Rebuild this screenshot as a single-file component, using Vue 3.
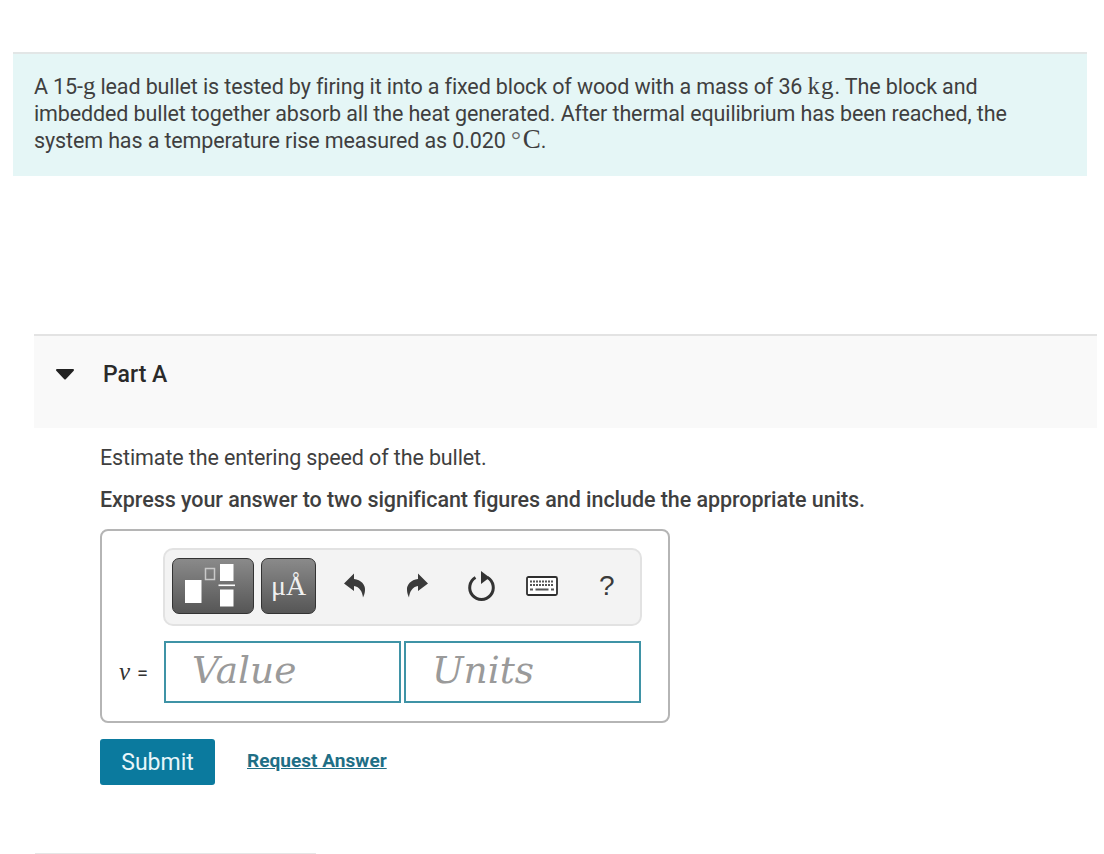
<script setup>
const placeholders = ['Value', 'Units']
</script>

<template>
  <div class="page">
    <section class="intro">
      <p>
        A 15-<span class="math">g</span> lead bullet is tested by firing it into a fixed block of wood with a mass of 36 <span class="math kg">kg</span>. The block and
        imbedded bullet together absorb all the heat generated. After thermal equilibrium has been reached, the
        system has a temperature rise measured as 0.020 <span class="math"><span class="deg">°</span><span class="celsius">C</span></span>.
      </p>
    </section>

    <section class="part">
      <header class="part-head">
        <svg class="caret" width="20" height="12" viewBox="0 0 20 12"><path d="M2 2H18L10 10.500Z" fill="#222" stroke="#222" stroke-width="2" stroke-linejoin="round" /></svg>
        <h2>Part A</h2>
      </header>

      <div class="part-body">
        <p class="question">Estimate the entering speed of the bullet.</p>
        <p class="instruction">Express your answer to two significant figures and include the appropriate units.</p>

        <div class="answer-box">
          <div class="toolbar">
            <button class="tool templates" aria-label="Templates">
              <svg width="80" height="54" viewBox="0 0 80 54">
                <rect x="12" y="21" width="16.500" height="23" fill="#fff" />
                <rect x="32.500" y="9.500" width="9" height="11" fill="none" stroke="#c9c9c9" stroke-width="1.500" />
                <rect x="47" y="5" width="13.500" height="17" fill="#fff" />
                <rect x="45.500" y="25.500" width="16.500" height="1.600" fill="#fff" />
                <rect x="47" y="30.500" width="13.500" height="17" fill="#fff" />
              </svg>
            </button>
            <button class="tool units-tool">μÅ</button>
            <div class="actions">
              <svg class="action" width="24" height="26" viewBox="0 0 24 26"><path d="M1 10.500 11 .5V6C18 6.500 22.500 12 22 17 22 20 21 22 20 24.500 19.500 19 16.500 13.500 11 13V18Z" fill="#3a3a3a" /></svg>
              <svg class="action" width="24" height="26" viewBox="0 0 24 26"><path d="M22 10.500 12 .5V6C5 6.500 .5 12 1 17 1 20 2 22 3 24.500 3.500 19 6.500 13.500 12 13V18Z" fill="#3a3a3a" /></svg>
              <svg class="action" width="30" height="32" viewBox="0 0 30 32">
                <path d="M9.500 7.500A11.800 11.800 0 1 0 21.500 7.500" fill="none" stroke="#333" stroke-width="3" />
                <path d="M15 1 23.500 7.500 15 14Z" fill="#333" />
              </svg>
              <svg class="action" width="32" height="20" viewBox="0 0 32 20">
                <rect x="1" y="1" width="30" height="18" rx="1.500" fill="#fff" stroke="#2e2e2e" stroke-width="1.800" />
                <path d="M4 5.500H28M4 9H28" stroke="#555" stroke-width="2" stroke-dasharray="2 1" />
                <path d="M4 13.500H7M9.500 13.500H22.500M25 13.500H28" stroke="#555" stroke-width="2" />
              </svg>
              <span class="help">?</span>
            </div>
          </div>

          <div class="input-row">
            <label class="var"><i>v</i> =</label>
            <div class="fields">
              <input v-for="p in placeholders" :key="p" class="field" :placeholder="p" />
            </div>
          </div>
        </div>

        <div class="submit-row">
          <button class="submit">Submit</button>
          <a class="request" href="#">Request Answer</a>
        </div>
      </div>
    </section>

    <div class="next-rule"></div>
  </div>
</template>

<style scoped>
.page {
  height: 854px;
  overflow: hidden;
  box-sizing: border-box;
  padding-top: 52px;
  font-family: Roboto, "Liberation Sans", sans-serif;
  color: #3f3f3f;
}

.intro {
  margin: 0 17px 0 13px;
  height: 124px;
  box-sizing: border-box;
  border-top: 2px solid #e2e6e6;
  background: #e5f6f6;
  padding: 19px 21px 0;
}

.intro p {
  margin: 0;
  font-size: 21.5px;
  line-height: 27px;
  letter-spacing: -0.12px;
}

.math {
  font-family: "Liberation Serif", serif;
  font-size: 25px;
  line-height: 0;
}

.kg {
  letter-spacing: 1px;
}

.deg {
  margin-right: 2px;
  color: #6a6a6a;
}

.celsius {
  font-size: 27px;
}

.part {
  margin: 158px 7px 0 34px;
}

.part-head {
  height: 94px;
  box-sizing: border-box;
  border-top: 2px solid #e3e3e3;
  background: #f9f9f9;
  display: flex;
  align-items: flex-start;
  padding: 25px 0 0 21px;
}

.caret {
  margin-top: 7px;
}

.part-head h2 {
  margin: 0 0 0 28px;
  font-size: 23px;
  line-height: 27px;
  font-weight: 500;
  color: #2a2a2a;
}

.part-body {
  padding: 16px 0 0 66px;
}

.question {
  margin: 0;
  font-size: 21.5px;
  line-height: 27px;
  letter-spacing: -0.12px;
}

.instruction {
  margin: 15px 0 0;
  font-size: 21.5px;
  line-height: 27px;
  font-weight: 500;
  letter-spacing: -0.06px;
}

.answer-box {
  margin-top: 16px;
  width: 570px;
  height: 194px;
  box-sizing: border-box;
  border: 2px solid #b5b5b5;
  border-radius: 8px;
  padding: 17px 26px 0 18px;
}

.toolbar {
  margin-left: 43px;
  height: 78px;
  box-sizing: border-box;
  background: #f3f3f3;
  border: 2px solid #e2e2e2;
  border-radius: 10px;
  display: flex;
  align-items: center;
  padding: 0 0 0 7px;
}

.tool {
  height: 56px;
  margin-bottom: 2px;
  padding: 0;
  border: 1px solid #333;
  border-radius: 7px;
  background: linear-gradient(#8a8a8a, #565656);
  color: #f0f0f0;
  display: flex;
  align-items: center;
  justify-content: center;
}

.templates {
  width: 82px;
}

.units-tool {
  width: 55px;
  margin-left: 7px;
  font-family: "Liberation Serif", serif;
  font-size: 28px;
}

.actions {
  display: flex;
  align-items: center;
  margin: 0 0 2px 27px;
}

.action:nth-child(2) {
  margin-left: 39px;
}

.action:nth-child(3) {
  margin-left: 36px;
}

.action:nth-child(4) {
  margin-left: 30px;
}

.help {
  margin-left: 41px;
  font-size: 28px;
  color: #3a3a3a;
  font-family: "Liberation Sans", sans-serif;
}

.input-row {
  display: flex;
  align-items: center;
  margin-top: 15px;
}

.var {
  width: 45px;
  flex: none;
  font-size: 20px;
  color: #333;
  margin-left: -1px;
}

.var i {
  font-family: "Liberation Serif", serif;
  font-size: 25px;
  margin-right: 2px;
}

.fields {
  display: flex;
  gap: 3px;
}

.field {
  width: 237px;
  height: 62px;
  box-sizing: border-box;
  border: 2px solid #3f93a6;
  padding: 0 0 5px 26px;
  font-family: "DejaVu Serif", serif;
  font-style: italic;
  font-size: 37.5px;
  outline: none;
  background: #fff;
}

.field::placeholder {
  color: #9a9a9a;
  opacity: 1;
}

.submit-row {
  margin-top: 16px;
  display: flex;
  align-items: center;
}

.submit {
  width: 115px;
  height: 46px;
  border: none;
  border-radius: 3px;
  background: #0b7a9e;
  color: #e8f6fa;
  font-family: Roboto, "Liberation Sans", sans-serif;
  font-size: 23px;
}

.request {
  margin: 0 0 4px 32px;
  color: #1f6f86;
  font-size: 19.1px;
  font-weight: 700;
}

.next-rule {
  position: absolute;
  left: 35px;
  top: 853px;
  width: 281px;
  height: 1px;
  background: #e6e6e6;
}
</style>

<style>
html,
body {
  margin: 0;
  background: #fff;
  overflow: hidden;
}
</style>
